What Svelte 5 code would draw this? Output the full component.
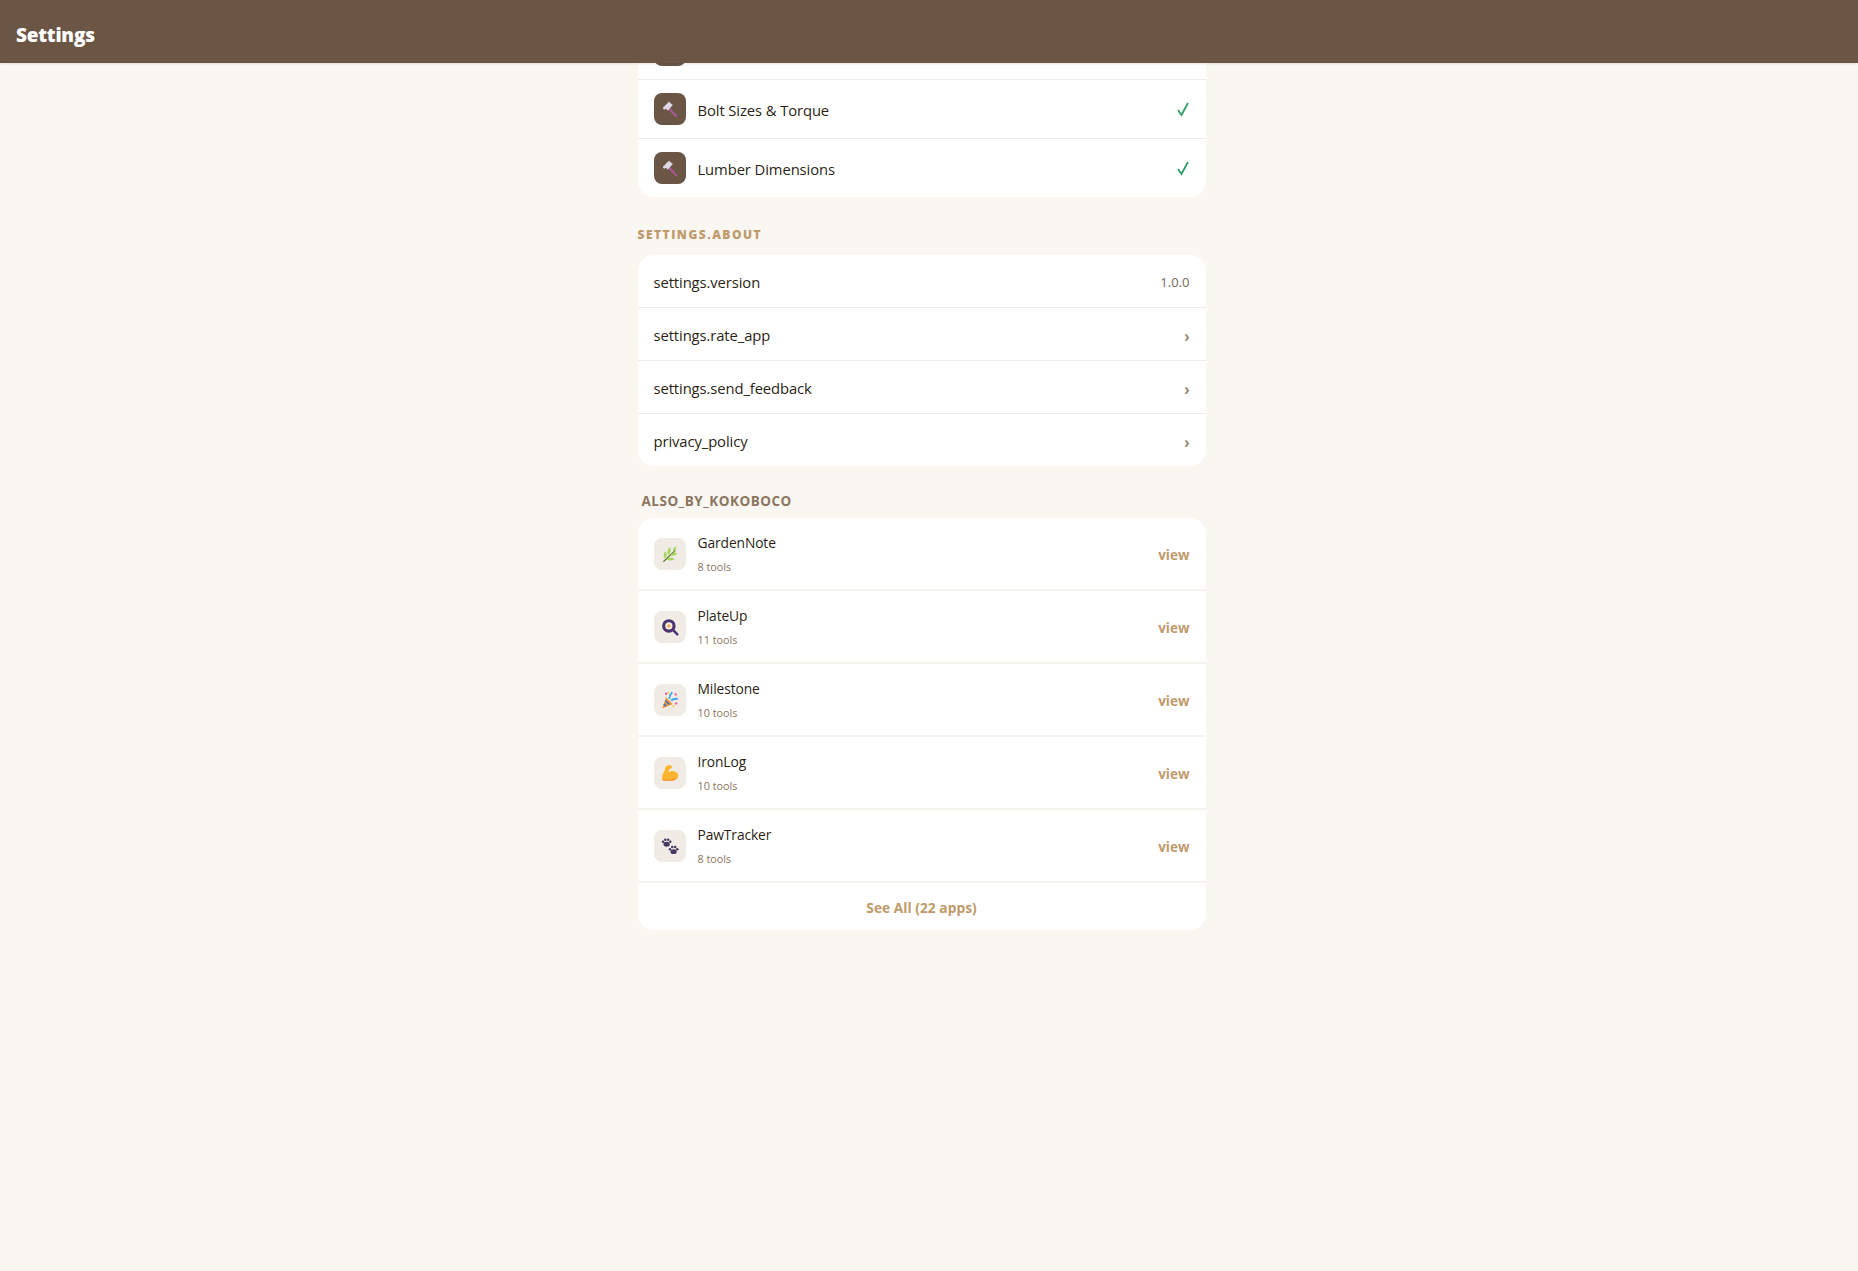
<script lang="ts">
	const tools = [
		{ name: '', icon: 'hammer', clipped: true },
		{ name: 'Bolt Sizes & Torque', icon: 'hammer' },
		{ name: 'Lumber Dimensions', icon: 'hammer' }
	];
	const about = [
		{ label: 'settings.version', value: '1.0.0' },
		{ label: 'settings.rate_app' },
		{ label: 'settings.send_feedback' },
		{ label: 'privacy_policy' }
	];
	const apps = [
		{ name: 'GardenNote', count: '8 tools', icon: 'herb' },
		{ name: 'PlateUp', count: '11 tools', icon: 'pan' },
		{ name: 'Milestone', count: '10 tools', icon: 'party' },
		{ name: 'IronLog', count: '10 tools', icon: 'arm' },
		{ name: 'PawTracker', count: '8 tools', icon: 'paw' }
	];
</script>

{#snippet emoji(kind: string)}
	<svg viewBox="0 0 16 16" width="18" height="18" aria-hidden="true">
		{#if kind === 'hammer'}
			<path d="M6.500 7 13.500 14.500" stroke="#a5588f" stroke-width="2" stroke-linecap="round" />
			<path d="M1.500 7 7 1.500l3.500 3-4.500 5-1.500-1.800-1.800 1z" fill="#dcd8e4" />
		{:else if kind === 'herb'}
			<path d="M2.500 14.500 12.500 5" stroke="#5f7f2e" stroke-width="1.200" stroke-linecap="round" />
			<path d="M3.500 12C1.500 9.500 2.500 6.500 4 5.500c1.500 2 1.500 4.500-.5 6.500zM6.500 9C5 6.500 6 3.500 8 2c1.200 2 .8 4.800-1.500 7zM5 12.500c2.500-1.500 5-1.500 7 0-2.500 1.800-5 1.800-7 0zM8.500 9c2-2 4-2.500 6-1.800-1.300 2.300-4 3-6 1.800zM10.500 6c-.2-2 1-4 3-4.800.5 2-.6 4-3 4.800z" fill="#a5d65a" />
		{:else if kind === 'pan'}
			<circle cx="7" cy="7" r="6" fill="#4b3470" />
			<circle cx="7" cy="7" r="3.200" fill="#f8efe2" />
			<circle cx="7" cy="7" r="1.500" fill="#f5a63b" />
			<path d="M11.500 11.500l3 3" stroke="#4b3470" stroke-width="2.200" stroke-linecap="round" />
		{:else if kind === 'party'}
			<path d="M1 15.500 4.500 5.500l6 6z" fill="#ee9a3a" />
			<path d="M2.500 11.500l2 2M3.800 8.500l3.500 3.500" stroke="#3f6fc0" stroke-width="1.400" />
			<path d="M7.500 7c0-2.500 1-4.500 2.500-6M9 8.500c1.500-1.300 3.500-2 6-1.500" stroke="#3fa9f5" stroke-width="1.700" fill="none" />
			<circle cx="4.500" cy="2.500" r="1.100" fill="#f05fa8" />
			<circle cx="13" cy="3" r="1.100" fill="#f05fa8" />
			<circle cx="6.500" cy="1.500" r=".9" fill="#f7c33c" />
			<circle cx="13.500" cy="11" r="1.100" fill="#f05fa8" />
			<circle cx="11" cy="13.500" r=".9" fill="#f7c33c" />
		{:else if kind === 'arm'}
			<path d="M1 13.500C.5 10 2.500 7 3.500 5.500 3 4 4 1.500 6.500 1c1.700-.3 3.300.3 3.300 1.700 0 1-1 1.700-2.300 1.700-.5 1-.8 2-.6 3 2.200-2 7.300-1.500 8.300 2 .6 2.800-1.200 5-4.300 5H2.500c-.8 0-1.400-.4-1.500-.9z" fill="#fbb52e" />
			<path d="M1.500 13.500c3.500.7 9 .7 12.500-1.300-.8 1.700-2.300 2.600-4.300 2.600H2.500c-.6 0-1-.6-1-1.300z" fill="#ef8c2a" />
		{:else if kind === 'paw'}
			<g fill="#453a63">
				<ellipse cx="5" cy="6.500" rx="2.800" ry="2.200" />
				<circle cx="1.800" cy="4.300" r="1.100" />
				<circle cx="3.800" cy="2.400" r="1.100" />
				<circle cx="6.400" cy="2.400" r="1.100" />
				<circle cx="8.300" cy="4.300" r="1.100" />
				<ellipse cx="11.200" cy="13" rx="2.800" ry="2.200" />
				<circle cx="8" cy="10.800" r="1.100" />
				<circle cx="10" cy="8.900" r="1.100" />
				<circle cx="12.600" cy="8.900" r="1.100" />
				<circle cx="14.500" cy="10.800" r="1.100" />
			</g>
		{/if}
	</svg>
{/snippet}

<div class="screen">
	<header class="topbar">
		<h1>Settings</h1>
	</header>
	<main class="main">
		<div class="column">
			<section class="card tools">
				{#each tools as tool}
					<div class="row tool-row">
						<span class="icon dark">{@render emoji(tool.icon)}</span>
						<span class="label">{tool.name}</span>
						{#if !tool.clipped}
							<svg class="check" viewBox="0 0 14 16" width="14" height="16" aria-hidden="true">
								<path d="M2 9l3.500 5L12 2" fill="none" stroke="#2f9e6b" stroke-width="1.800" />
							</svg>
						{/if}
					</div>
				{/each}
			</section>

			<h2 class="section about-title">SETTINGS.ABOUT</h2>
			<section class="card">
				{#each about as item}
					<div class="row about-row">
						<span class="label">{item.label}</span>
						{#if item.value}
							<span class="value">{item.value}</span>
						{:else}
							<span class="chevron">›</span>
						{/if}
					</div>
				{/each}
			</section>

			<h2 class="section also-title">ALSO_BY_KOKOBOCO</h2>
			<section class="card">
				{#each apps as app}
					<div class="row app-row">
						<span class="icon light">{@render emoji(app.icon)}</span>
						<div class="app-text">
							<span class="app-name">{app.name}</span>
							<span class="app-count">{app.count}</span>
						</div>
						<span class="view">view</span>
					</div>
				{/each}
				<div class="see-all">See All (22 apps)</div>
			</section>
		</div>
	</main>
</div>

<style>
	:global(body) {
		margin: 0;
		background: #faf7f2;
		font-family: 'Open Sans', 'Noto Sans', sans-serif;
		color: #2c1f16;
	}

	.screen {
		display: flex;
		flex-direction: column;
		height: 100vh;
		overflow: hidden;
	}

	.topbar {
		position: relative;
		z-index: 1;
		flex: none;
		display: flex;
		align-items: center;
		height: 63px;
		padding: 6px 16px 0;
		box-sizing: border-box;
		background: #6b5646;
		box-shadow: 0 1px 2px rgb(0 0 0 / 10%);
	}

	h1 {
		margin: 0;
		font-size: 19px;
		font-weight: 800;
		letter-spacing: -0.2px;
		color: #fff;
	}

	.main {
		flex: 1;
		overflow: hidden;
		padding-right: 15px;
	}

	.column {
		width: 568px;
		margin: -42px auto 0;
	}

	.card {
		overflow: hidden;
		border-radius: 16px;
		background: #fff;
	}

	.row {
		display: flex;
		align-items: center;
		padding: 0 16px;
		box-sizing: border-box;
		border-bottom: 1px solid #f0ebe4;
	}

	.row:last-child {
		border-bottom: none;
	}

	.tool-row {
		height: 59px;
		gap: 12px;
	}

	.tool-row:last-child {
		height: 58px;
	}

	.tool-row .label {
		padding-top: 1px;
	}

	.about-row {
		height: 53px;
		justify-content: space-between;
		padding-top: 1px;
	}

	.about-row:last-child {
		height: 52px;
	}

	.app-row {
		height: 73px;
		gap: 12px;
		border-bottom: 2px solid #f7f3ee;
	}

	.icon {
		flex: none;
		display: flex;
		align-items: center;
		justify-content: center;
		width: 32px;
		height: 32px;
		border-radius: 8px;
	}

	.dark {
		background: #6b5646;
	}

	.light {
		background: #f0ebe4;
	}

	.label {
		flex: 1;
		font-size: 14.800px;
		font-weight: 500;
		letter-spacing: -0.1px;
	}

	.check {
		flex: none;
	}

	.value {
		font-size: 13px;
		font-weight: 500;
		color: #7a6857;
	}

	.chevron {
		font-size: 16px;
		font-weight: 600;
		color: #8c7a68;
		padding-top: 2px;
	}

	.section {
		margin: 0;
		font-weight: 800;
	}

	.about-title {
		padding: 30px 0 12px;
		font-size: 12px;
		line-height: 16px;
		letter-spacing: 1.500px;
		color: #c09a6b;
	}

	.also-title {
		padding: 27px 4px 9px;
		font-size: 13.500px;
		line-height: 16px;
		font-weight: 700;
		letter-spacing: 0.5px;
		color: #8b7560;
	}

	.app-text {
		flex: 1;
		display: flex;
		flex-direction: column;
		gap: 7px;
		padding-top: 2px;
	}

	.app-name {
		font-size: 13.800px;
		line-height: 18px;
		font-weight: 500;
		letter-spacing: -0.1px;
	}

	.app-count {
		font-size: 10.800px;
		line-height: 16px;
		color: #8b7560;
	}

	.view {
		padding-top: 2px;
		font-size: 13.500px;
		font-weight: 700;
		color: #c09a6b;
	}

	.see-all {
		display: flex;
		align-items: center;
		justify-content: center;
		height: 47px;
		padding-top: 2px;
		box-sizing: border-box;
		font-size: 13.800px;
		font-weight: 700;
		color: #c09a6b;
	}
</style>
